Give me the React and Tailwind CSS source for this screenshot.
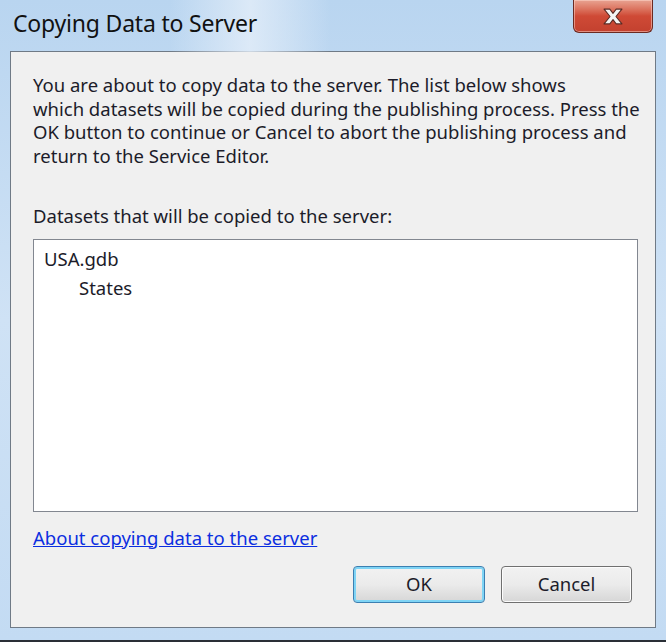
// Boîte de dialogue Windows 7 — "Copying Data to Server"
export default function App() {
  const police = { fontFamily: '"Noto Sans", "Open Sans", Arial, sans-serif' };

  return (
    <div
      className="w-[666px] h-[642px] flex flex-col bg-gradient-to-b from-[#b9d5f0] via-[#cfe2f5] to-[#c3dbf3] border-b-2 border-[#2a2f36] relative overflow-hidden"
      style={police}
    >
      {/* Reflet clair dans la barre de titre */}
      <div className="absolute left-[170px] top-0 w-[160px] h-[52px] bg-gradient-to-r from-transparent via-[#e4eef9] to-transparent opacity-80 pointer-events-none" />

      {/* Barre de titre */}
      <div className="h-[51px] flex items-start justify-between relative">
        <div className="pl-[13px] pt-[8px] text-[23px] text-[#111] leading-[30px] tracking-[-0.2px]">
          Copying Data to Server
        </div>
        <button className="mr-[13px] w-[80px] h-[33px] rounded-b-[6px] border border-t-0 border-[#6b2a22] bg-gradient-to-b from-[#e8a392] via-[#cf4a36] to-[#c3412f] flex items-center justify-center shadow-[inset_0_0_0_1px_rgba(255,220,210,0.5)]">
          <svg width="24" height="19" viewBox="0 0 22 18">
            <path
              d="M2.5 2 L8 2 L11 6 L14 2 L19.5 2 L13.8 9 L19.5 16 L14 16 L11 12 L8 16 L2.5 16 L8.2 9 Z"
              fill="#f4f4f4"
              stroke="#5a2a24"
              strokeWidth="1"
              strokeLinejoin="round"
            />
          </svg>
        </button>
      </div>

      {/* Panneau principal */}
      <div className="mx-[10px] flex-1 border border-[#6f7a86] bg-[#f0f0f0] flex flex-col px-[22px] pt-[21px] text-[18.5px] text-[#1c1c2a]">
        <p className="leading-[23.5px] whitespace-nowrap">
          You are about to copy data to the server. The list below shows
          <br />
          which datasets will be copied during the publishing process. Press the
          <br />
          OK button to continue or Cancel to abort the publishing process and
          <br />
          return to the Service Editor.
        </p>

        <p className="mt-[37px] leading-[23.5px]">
          Datasets that will be copied to the server:
        </p>

        {/* Liste des jeux de données */}
        <div className="mt-[11px] h-[273px] w-[605px] border border-[#828790] bg-white px-[10px] pt-[4px] leading-[29px]">
          <div>USA.gdb</div>
          <div className="pl-[35px]">States</div>
        </div>

        <a href="#" className="mt-[14px] self-start leading-[24px] text-[#0b2ee0] underline">
          About copying data to the server
        </a>

        {/* Boutons */}
        <div className="mt-[16px] flex justify-end gap-[16px] pr-[1px]">
          <button className="w-[132px] h-[37px] rounded-[4px] border border-[#3c7fb1] bg-gradient-to-b from-[#f2f2f2] via-[#ebebeb] to-[#d6d6d6] shadow-[inset_0_0_0_2px_#7fd4f5]">
            OK
          </button>
          <button className="w-[131px] h-[37px] rounded-[4px] border border-[#707070] bg-gradient-to-b from-[#f2f2f2] via-[#ebebeb] to-[#d6d6d6] shadow-[inset_0_0_0_1px_#fcfcfc]">
            Cancel
          </button>
        </div>
      </div>

      {/* Bordure inférieure du cadre */}
      <div className="h-[12px]" />
    </div>
  );
}
